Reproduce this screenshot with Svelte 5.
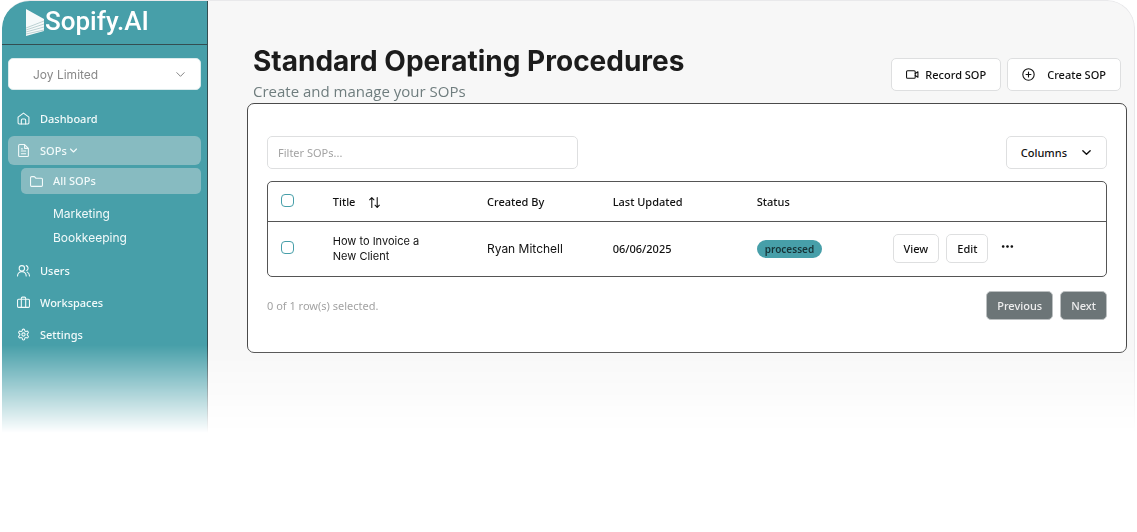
<script>
  let workspace = $state('Joy Limited');
  let filter = $state('');
  const rows = [
    { title: 'How to Invoice a New Client', by: 'Ryan Mitchell', updated: '06/06/2025', status: 'processed' }
  ];
</script>

{#snippet icon(name)}
  <svg class="icon" viewBox="0 0 24 24" aria-hidden="true">
    {#if name === 'home'}
      <path d="M2 9.500 12 2l10 7.500V20a2 2 0 0 1-2 2H4a2 2 0 0 1-2-2z" /><path d="M8 22v-7a2 2 0 0 1 2-2h4a2 2 0 0 1 2 2v7" />
    {:else if name === 'file'}
      <path d="M14 1H5a2 2 0 0 0-2 2v18a2 2 0 0 0 2 2h14a2 2 0 0 0 2-2V8zM14 1v7h7M8 9h2M8 13h8M8 18h8" />
    {:else if name === 'folder'}
      <path d="M1 5a2 2 0 0 1 2-2h5l3 3h10a2 2 0 0 1 2 2v11a2 2 0 0 1-2 2H3a2 2 0 0 1-2-2z" />
    {:else if name === 'users'}
      <circle cx="9" cy="8" r="5" /><path d="M1 22a8 8 0 0 1 16 0M17 3a5 5 0 0 1 1 9M19 15a8 8 0 0 1 4 7" />
    {:else if name === 'case'}
      <rect x="1" y="6" width="22" height="15" rx="2" /><path d="M8 21V4a2 2 0 0 1 2-2h4a2 2 0 0 1 2 2v17" />
    {:else if name === 'gear'}
      <path d="M12.200 2h-.4a2 2 0 0 0-2 2v.2a2 2 0 0 1-1 1.700l-.4.300a2 2 0 0 1-2 0l-.200-.1a2 2 0 0 0-2.700.7l-.2.400a2 2 0 0 0 .7 2.700l.2.1a2 2 0 0 1 1 1.700v.6a2 2 0 0 1-1 1.700l-.2.1a2 2 0 0 0-.7 2.700l.2.400a2 2 0 0 0 2.700.7l.2-.1a2 2 0 0 1 2 0l.4.300a2 2 0 0 1 1 1.700v.2a2 2 0 0 0 2 2h.4a2 2 0 0 0 2-2v-.2a2 2 0 0 1 1-1.700l.4-.3a2 2 0 0 1 2 0l.2.1a2 2 0 0 0 2.700-.7l.2-.4a2 2 0 0 0-.7-2.700l-.2-.1a2 2 0 0 1-1-1.700v-.6a2 2 0 0 1 1-1.700l.2-.1a2 2 0 0 0 .7-2.700l-.2-.4a2 2 0 0 0-2.700-.7l-.2.1a2 2 0 0 1-2 0l-.4-.3a2 2 0 0 1-1-1.700V4a2 2 0 0 0-2-2z" /><circle cx="12" cy="12" r="3" />
    {:else if name === 'video'}
      <rect x="1" y="5" width="16" height="14" rx="2" /><path d="m17 10 5-3v10l-5-3" />
    {:else if name === 'plus'}
      <circle cx="12" cy="12" r="10.500" /><path d="M7.500 12h9M12 7.500v9" />
    {:else if name === 'sort'}
      <path d="M7 21V3M3 7l4-4 4 4M17 3v18M13 17l4 4 4-4" />
    {:else if name === 'chevron'}
      <path d="m4 8 8 8 8-8" />
    {:else if name === 'dots'}
      <g fill="currentColor"><circle cx="4" cy="12" r="1.500" /><circle cx="12" cy="12" r="1.500" /><circle cx="20" cy="12" r="1.500" /></g>
    {/if}
  </svg>
{/snippet}

<div class="app">
  <aside>
    <a class="brand" href="#home">
      <svg viewBox="0 0 20 28" aria-hidden="true">
        <path d="M1 1 19 11v12L1 28z" fill="#f6fafa" />
        <path d="m1 20 18-7M1 22l18-6M1 24l18-5M1 26l18-4" fill="none" stroke="#a3c0c2" stroke-width=".7" />
      </svg>
      <span>Sopify.AI</span>
    </a>
    <div class="side">
      <div class="workspace">
        <select bind:value={workspace} aria-label="Workspace"><option>Joy Limited</option></select>
        {@render icon('chevron')}
      </div>
      <nav>
        <a href="#dashboard">{@render icon('home')}Dashboard</a>
        <a class="on" href="#sops">{@render icon('file')}<span class="fold">SOPs{@render icon('chevron')}</span></a>
        <div class="sub">
          <a class="on" href="#all">{@render icon('folder')}All SOPs</a>
          <a class="leaf first" href="#marketing">Marketing</a>
          <a class="leaf" href="#bookkeeping">Bookkeeping</a>
        </div>
        <a href="#users">{@render icon('users')}Users</a>
        <a href="#workspaces">{@render icon('case')}Workspaces</a>
        <a href="#settings">{@render icon('gear')}Settings</a>
      </nav>
    </div>
  </aside>

  <main>
    <header>
      <div>
        <h1>Standard Operating Procedures</h1>
        <p>Create and manage your SOPs</p>
      </div>
      <div class="actions">
        <button>{@render icon('video')}Record SOP</button>
        <button class="create">{@render icon('plus')}Create SOP</button>
      </div>
    </header>

    <section>
      <div class="tools">
        <input class="filter" type="text" placeholder="Filter SOPs..." aria-label="Filter SOPs" bind:value={filter} />
        <button class="columns">Columns{@render icon('chevron')}</button>
      </div>
      <div class="frame">
        <table>
          <colgroup><col class="c1" /><col class="c2" /><col class="c3" /><col class="c4" /><col class="c5" /><col /></colgroup>
          <thead>
            <tr>
              <th><input type="checkbox" aria-label="Select all" /></th>
              <th><button class="sort">Title{@render icon('sort')}</button></th>
              <th>Created By</th>
              <th>Last Updated</th>
              <th>Status</th>
              <th></th>
            </tr>
          </thead>
          <tbody>
            {#each rows as row}
              <tr>
                <td><input type="checkbox" aria-label="Select row" /></td>
                <td><div class="name">{row.title}</div></td>
                <td class="person">{row.by}</td>
                <td>{row.updated}</td>
                <td><span class="badge">{row.status}</span></td>
                <td>
                  <div class="ops">
                    <button>View</button>
                    <button>Edit</button>
                    <button class="more" aria-label="More actions">{@render icon('dots')}</button>
                  </div>
                </td>
              </tr>
            {/each}
          </tbody>
        </table>
      </div>
      <footer>
        <span>0 of 1 row(s) selected.</span>
        <div class="pager">
          <button>Previous</button>
          <button>Next</button>
        </div>
      </footer>
    </section>
  </main>
</div>

<style>
  :global(body) { background: #fff; }
  * { box-sizing: border-box; }
  .app {
    display: flex;
    margin: 0 2px;
    border: 1px solid #e9e9eb;
    border-width: 1px 1px 0 0;
    border-radius: 28px 28px 0 0;
    overflow: hidden;
    background: #f7f7f7;
    color: #111;
    font: 500 11px/16px "Noto Sans", sans-serif;
    mask-image: linear-gradient(to top, transparent, #000 88px);
  }
  .icon { width: 13px; height: 13px; flex: none; fill: none; stroke: currentColor; stroke-width: 2; stroke-linecap: round; stroke-linejoin: round; }
  a { color: inherit; text-decoration: none; }
  button {
    display: flex; align-items: center; justify-content: center;
    height: 33px; padding: 0 14px;
    background: #fff; border: 1px solid #dedfe0; border-radius: 5px;
    color: #111; font: inherit; white-space: nowrap;
  }
  aside { width: 206px; flex: none; background: #479fa9; border-right: 1px solid #334e52; color: #f2fafa; }
  .brand { display: flex; height: 44px; padding: 7px 0 0 23px; border-bottom: 1px solid #334e52; font: 500 26px/26px Roboto, sans-serif; color: #fff; }
  .brand svg { width: 20px; height: 28px; flex: none; }
  .side { padding: 13px 6px 0; }
  .workspace { display: grid; align-items: center; }
  .workspace > :global(*) { grid-area: 1 / 1; }
  .workspace .icon { width: 11px; height: 11px; justify-self: end; margin-right: 15px; color: #777; pointer-events: none; }
  select { appearance: none; width: 100%; height: 32px; padding: 0 24px; border: 1px solid #dcebec; border-radius: 5px; background: #fff; color: #888; font: 400 12px Inter, sans-serif; }
  nav { display: flex; flex-direction: column; gap: 3px; padding-top: 14px; }
  nav a { display: flex; align-items: center; gap: 10px; height: 29px; padding: 0 9px; border-radius: 6px; }
  nav .on { background: #87bbc1; }
  .fold { display: flex; align-items: center; gap: 2px; }
  .fold .icon { width: 9px; height: 9px; stroke-width: 3; }
  .sub { display: flex; flex-direction: column; padding: 0 0 4px 13px; }
  .sub .on { height: 26px; border-radius: 5px; }
  .sub .leaf { height: 24px; padding-left: 32px; font: 400 12px Inter, sans-serif; }
  .sub .first { margin-top: 7px; }

  main { flex: 1; min-width: 0; padding: 42px 7px 80px 39px; }
  header { display: flex; justify-content: space-between; padding: 0 6px; }
  h1 { margin: 0; font: 700 28px/36px Inter, sans-serif; color: #1c1c1c; white-space: nowrap; }
  header p { margin: 0; font: 400 15px/24px "Open Sans", sans-serif; color: #6f7d7e; }
  .actions { display: flex; gap: 6px; padding-top: 15px; }
  .actions button { gap: 6px; }
  .actions .create { gap: 12px; }
  section { padding: 32px 19px; border: 1px solid #4a4a4a; border-radius: 7px; background: #fff; }
  .tools { display: flex; justify-content: space-between; margin-bottom: 12px; }
  .filter { width: 37%; height: 33px; padding: 0 10px; border: 1px solid #dedfe0; border-radius: 5px; background: #fff; font: 400 11px "Noto Sans", sans-serif; color: #111; }
  .filter::placeholder { color: #a3a3a3; opacity: 1; }
  .columns { gap: 14px; }
  .columns .icon { width: 11px; height: 11px; stroke-width: 3; }
  .frame { border: 1px solid #555; border-radius: 5px; overflow: hidden; }
  table { width: 100%; table-layout: fixed; border-collapse: collapse; }
  .c1 { width: 6.3%; } .c2 { width: 18.4%; } .c3 { width: 15%; } .c4 { width: 17.2%; } .c5 { width: 16.2%; }
  th, td { padding: 0 12px; text-align: left; font-weight: 500; vertical-align: middle; white-space: nowrap; }
  th { height: 39px; padding-top: 2px; border-bottom: 1px solid #555; }
  td { height: 55px; }
  input[type="checkbox"] { appearance: none; display: block; width: 13px; height: 13px; margin: 0 0 3px 1px; border: 1px solid #479fa9; border-radius: 4px; background: #fff; }
  .sort { height: 20px; padding: 0; border: 0; gap: 13px; background: none; }
  .name { max-width: 96px; white-space: normal; font: 400 11px/15px Inter, sans-serif; }
  .person { font: 400 12px Inter, sans-serif; }
  .badge { display: inline-block; padding: 0 8px; border-radius: 9px; background: #479fa9; color: #173337; font-size: 10px; font-weight: 600; line-height: 18px; vertical-align: middle; }
  .ops { display: flex; gap: 7px; }
  .ops button, .pager button { height: 29px; padding: 0 10px; }
  .ops .more { padding: 0; margin-left: 6px; border: 0; height: 24px; background: none; }
  footer { display: flex; justify-content: space-between; align-items: center; margin-top: 14px; color: #a3a3a3; font-weight: 400; }
  .pager { display: flex; gap: 7px; font-weight: 500; }
  .pager button { background: #6c7577; border-color: #bcc0c1; color: #eee; }
</style>
